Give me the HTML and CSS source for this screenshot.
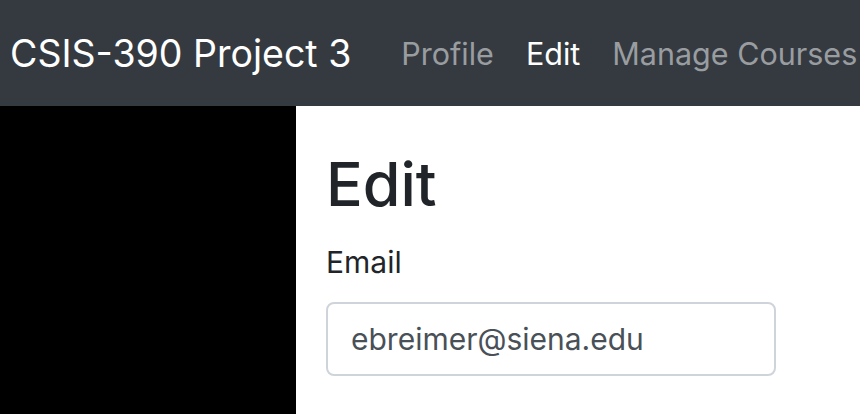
FILE: index.html
```html
<!DOCTYPE html>
<html>
<head>
<meta charset="utf-8">
<link rel="stylesheet" href="styles.css">
</head>
<body>
<nav class="navbar">
  <a class="brand" href="#">CSIS-390 Project 3</a>
  <ul class="nav">
    <li><a class="nav-link" href="#">Profile</a></li>
    <li><a class="nav-link active" href="#">Edit</a></li>
    <li><a class="nav-link" href="#">Manage Courses</a></li>
  </ul>
</nav>
<div class="layout">
  <aside class="sidebar"></aside>
  <main class="content">
    <h1 class="title">Edit</h1>
    <label class="label" for="email">Email</label>
    <input class="input" id="email" type="text" value="ebreimer@siena.edu">
  </main>
</div>
</body>
</html>
```
FILE: styles.css
```css
* { box-sizing: border-box; }
html, body { margin: 0; padding: 0; height: 100%; }
body {
  font-family: Inter, "Liberation Sans", sans-serif;
  background: #fff;
  color: #212529;
  display: flex;
  flex-direction: column;
  overflow: hidden;
}
.navbar {
  height: 106px;
  flex: none;
  background: #343a40;
  display: flex;
  align-items: center;
  padding: 0 10px;
  white-space: nowrap;
}
.brand {
  flex: none;
  color: #fff;
  text-decoration: none;
  font-size: 37.5px;
  margin-right: 50px;
}
.nav {
  flex: none;
  list-style: none;
  margin: 0;
  padding: 0;
  display: flex;
  gap: 32px;
}
.nav-link {
  color: #9a9da0;
  text-decoration: none;
  font-size: 30.5px;
}
.nav-link.active { color: #fff; }
.layout {
  flex: 1;
  display: flex;
}
.sidebar {
  width: 296px;
  flex: none;
  background: #000;
}
.content {
  flex: 1;
  padding: 0 30px;
}
.title {
  font-size: 61px;
  font-weight: 500;
  margin: 42px 0 0;
  line-height: 1.2;
}
.label {
  display: block;
  font-size: 30px;
  margin-top: 23px;
  line-height: 1.2;
}
.input {
  display: block;
  margin-top: 22px;
  width: 450px;
  height: 74px;
  border: 2px solid #ced4da;
  border-radius: 8px;
  padding: 0 23px;
  font-family: Inter, "Liberation Sans", sans-serif;
  font-size: 30px;
  color: #495057;
  background: #fff;
  outline: none;
}
```
